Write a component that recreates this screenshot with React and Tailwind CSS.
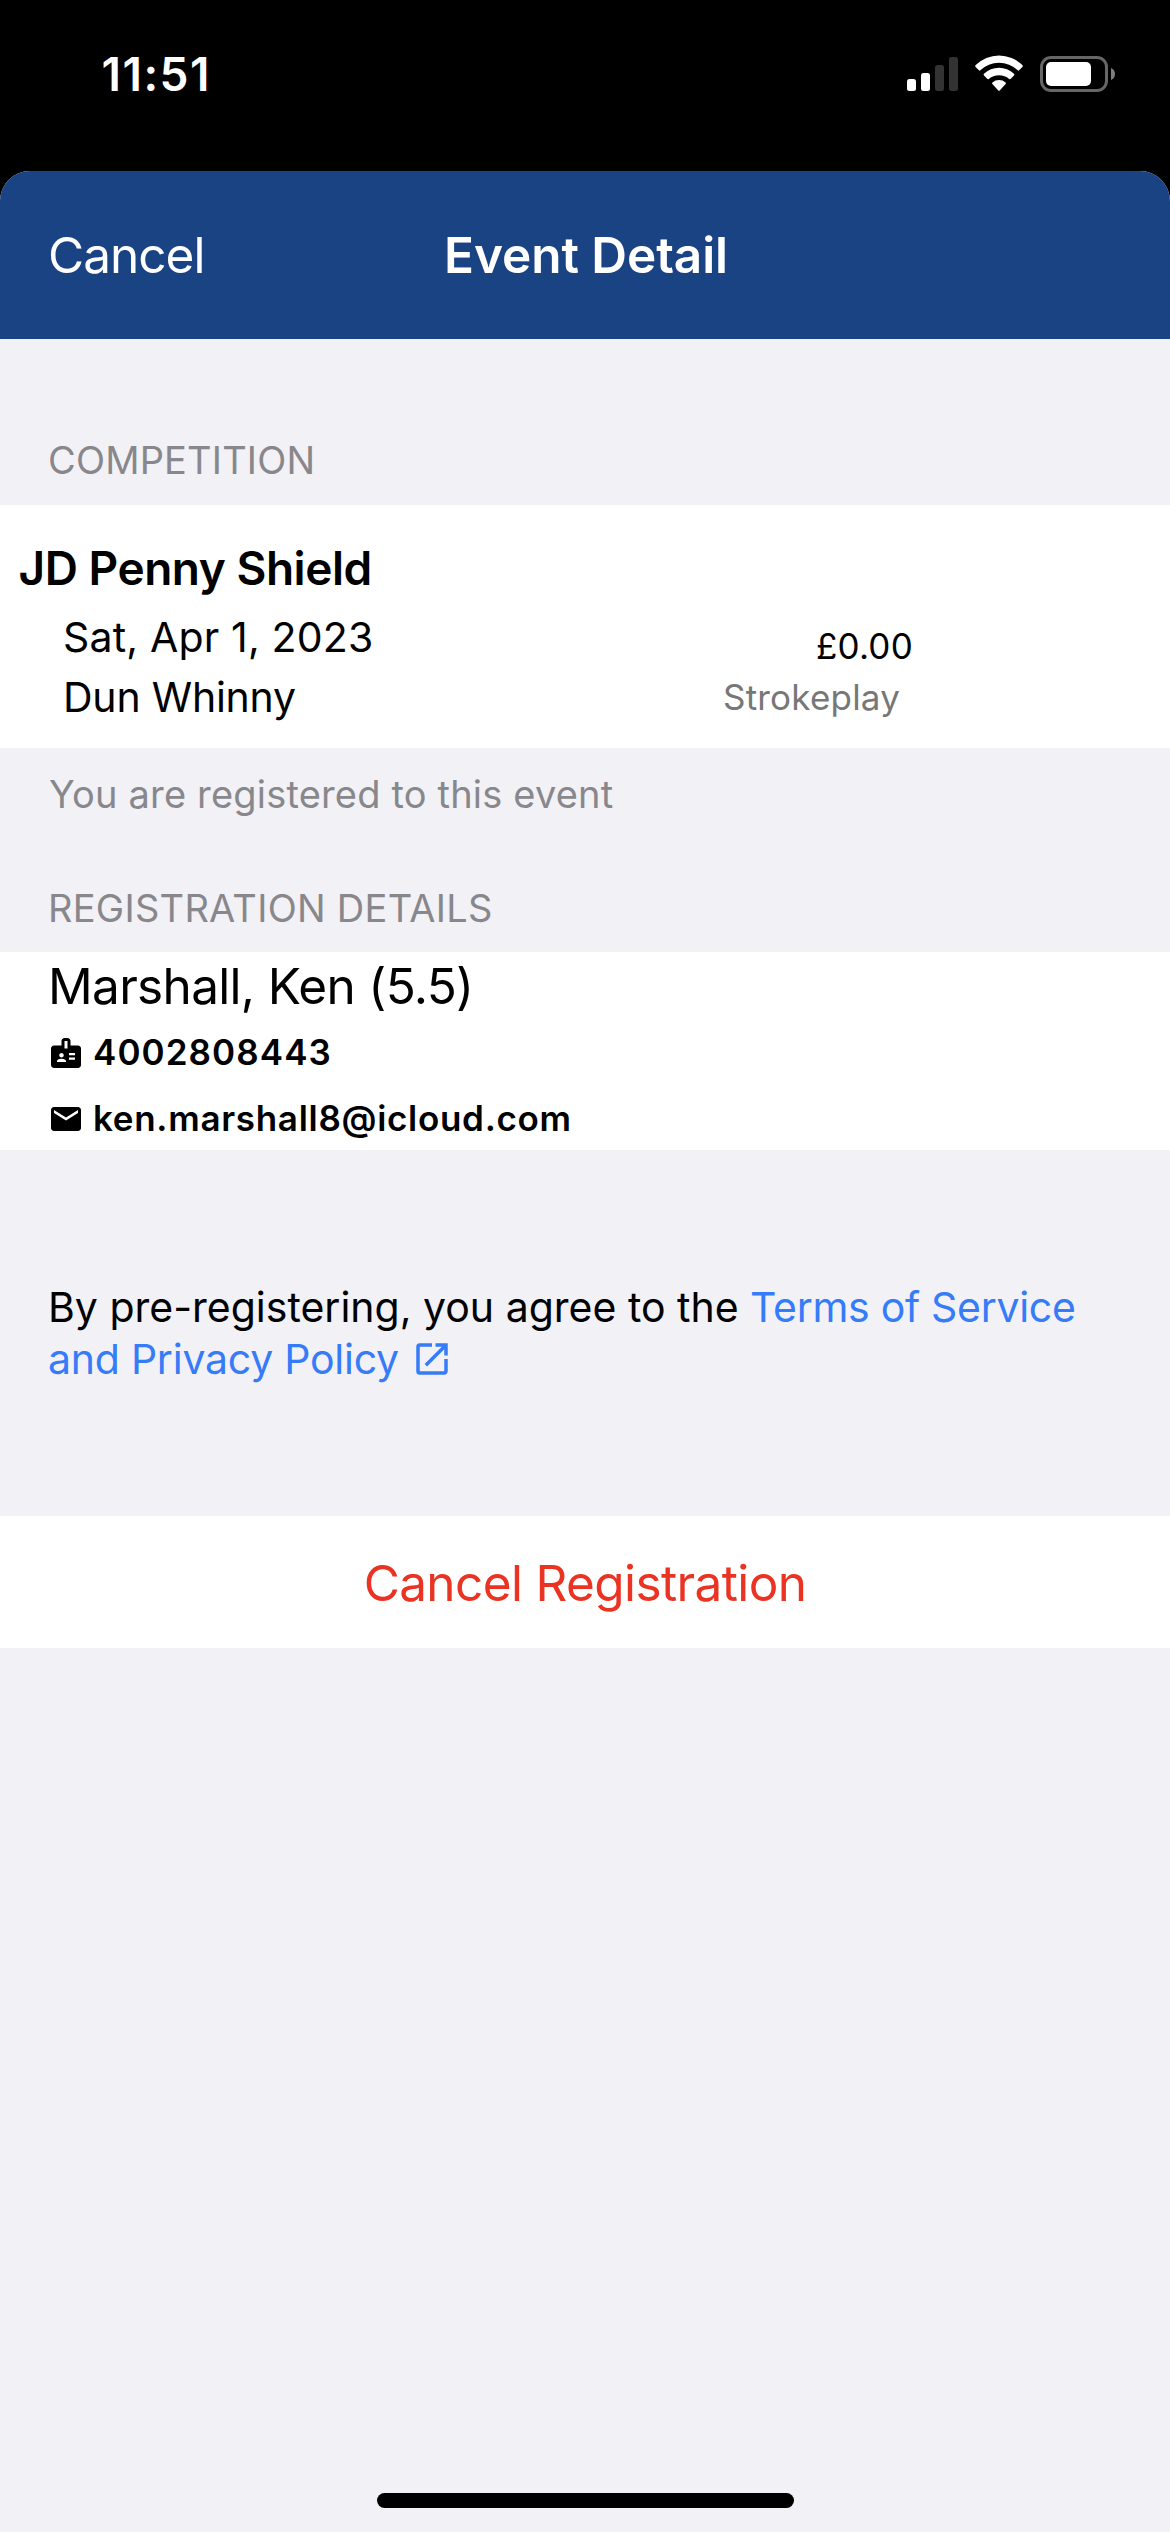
import { MdBadge, MdEmail, MdOpenInNew } from "react-icons/md";

const event = {
  name: "JD Penny Shield",
  date: "Sat, Apr 1, 2023",
  venue: "Dun Whinny",
  price: "£0.00",
  format: "Strokeplay",
};

const player = {
  name: "Marshall, Ken (5.5)",
  contacts: [
    { icon: MdBadge, value: "4002808443", style: "ml-[9px] tracking-[1.08px]" },
    { icon: MdEmail, value: "ken.marshall8@icloud.com", style: "ml-[9px] tracking-[0.7px]" },
  ],
};

function SignalIcon() {
  return (
    <svg width="51" height="40" viewBox="0 0 51 40" fill="#fff">
      <rect x="0" y="25" width="9" height="12" rx="2.5" />
      <rect x="14" y="19" width="9" height="18" rx="2.5" />
      <rect x="28" y="11" width="9" height="26" rx="2.5" fill="#333" />
      <rect x="42" y="3" width="9" height="34" rx="2.5" fill="#333" />
    </svg>
  );
}

function WifiIcon() {
  return (
    <svg width="48" height="40" viewBox="0 0 48 40" fill="#fff">
      <path d="M.7 11.1A33 33 0 0 1 47.3 11.1Q48.2 12 47.4 12.9L44.1 16.3Q43.4 17 42.7 16.3A27 27 0 0 0 5.3 16.3Q4.6 17 3.9 16.3L.6 12.9Q-.2 12 .7 11.1Z" />
      <path d="M9 19.7A21.7 21.7 0 0 1 39 19.7Q39.9 20.5 39 21.4L35.8 24.8Q35 25.6 34.2 24.9A16 16 0 0 0 13.8 24.9Q13 25.6 12.2 24.8L9 21.4Q8.1 20.5 9 19.7Z" />
      <path d="M17.4 28.5A10 10 0 0 1 30.6 28.5Q31.4 29.2 30.6 30L24.7 36.5Q24 37.3 23.3 36.5L17.4 30Q16.6 29.2 17.4 28.5Z" />
    </svg>
  );
}

function BatteryIcon() {
  return (
    <svg width="75" height="40" viewBox="0 0 75 40">
      <rect x="1.5" y="3.5" width="65" height="33" rx="9.5" fill="none" stroke="#666" strokeWidth="3" />
      <rect x="6" y="8" width="45" height="24" rx="5" fill="#fff" />
      <path d="M71 14C73.5 15 75 17.3 75 20C75 22.7 73.5 25 71 26Z" fill="#7f7f7f" />
    </svg>
  );
}

function SectionLabel({ children }) {
  return <h2 className="pl-12 text-[38px] leading-[50px] text-[#88878c]">{children}</h2>;
}

export default function App() {
  return (
    <div className="flex h-[2532px] w-[1170px] flex-col bg-black font-['Inter',sans-serif] text-black">

      {/* Status bar */}
      <div className="flex h-[171px] items-start justify-between pt-11 pr-[55px] pl-[101.5px]">
        <span className="text-[46px] leading-[60px] font-semibold tracking-[1.5px] text-white">11:51</span>
        <div className="flex h-[60px] items-center gap-[17px]">
          <SignalIcon />
          <WifiIcon />
          <BatteryIcon />
        </div>
      </div>

      {/* Sheet */}
      <div className="flex flex-1 flex-col overflow-hidden rounded-t-[30px] bg-[#f2f1f6]">
        <header className="grid h-[168px] shrink-0 grid-cols-[1fr_auto_1fr] items-center bg-[#1a4384] px-12 text-[49.5px] leading-[60px] text-white">
          <button className="text-left tracking-[-0.97px]">Cancel</button>
          <h1 className="pl-0.5 font-semibold tracking-[-0.07px]">Event Detail</h1>
        </header>

        {/* Competition */}
        <div className="pt-24 pb-5 tracking-[0.17px]">
          <SectionLabel>COMPETITION</SectionLabel>
        </div>
        <section className="h-[243px] bg-white pt-[33px]">
          <h3 className="pl-[18.5px] text-[46px] leading-[60px] font-semibold tracking-[-0.47px]">{event.name}</h3>
          <div className="mt-[9px] flex pl-[63px]">
            <div className="w-[660px] text-[41px] leading-[60px]">
              <p className="tracking-[0.18px]">{event.date}</p>
              <p className="tracking-[-0.22px]">{event.venue}</p>
            </div>
            <div className="pt-3.5 text-[35px] leading-[50px] tracking-[0.2px]">
              <p className="pl-[93px]">{event.price}</p>
              <p className="mt-px text-[#777]">{event.format}</p>
            </div>
          </div>
        </section>
        <p className="pt-[21px] pl-[49px] text-[38px] leading-[50px] tracking-[0.18px] text-[#88878c]">
          You are registered to this event
        </p>

        {/* Registration details */}
        <div className="pt-16 pb-[19px] tracking-[0.27px]">
          <SectionLabel>REGISTRATION DETAILS</SectionLabel>
        </div>
        <section className="h-[198px] bg-white pt-1 pl-12">
          <p className="text-[49.5px] leading-[60px] tracking-[-0.68px]">{player.name}</p>
          <div className="mt-[5px] flex flex-col gap-1 text-[35px] font-semibold">
            {player.contacts.map(({ icon: Icon, value, style }) => (
              <div key={value} className="flex h-[62px] items-center">
                <Icon size={36} className="mt-0.5" />
                <span className={style}>{value}</span>
              </div>
            ))}
          </div>
        </section>

        {/* Terms */}
        <p className="py-[131px] pl-12 text-[41px] leading-[52px]">
          By pre-registering, you agree to the{" "}
          <a className="tracking-[-0.3px] text-[#367bf7]">
            Terms of Service
            <span className="flex items-center tracking-[-0.24px]">
              and Privacy Policy
              <MdOpenInNew size={42} className="ml-3" />
            </span>
          </a>
        </p>

        <button className="h-[132px] shrink-0 bg-white pt-px text-[49.5px] leading-[60px] tracking-[-0.62px] text-[#eb3323]">
          Cancel Registration
        </button>

        {/* Home indicator */}
        <div className="mt-auto mb-6 h-[15px] w-[417px] self-center rounded-full bg-black" />
      </div>
    </div>
  );
}
